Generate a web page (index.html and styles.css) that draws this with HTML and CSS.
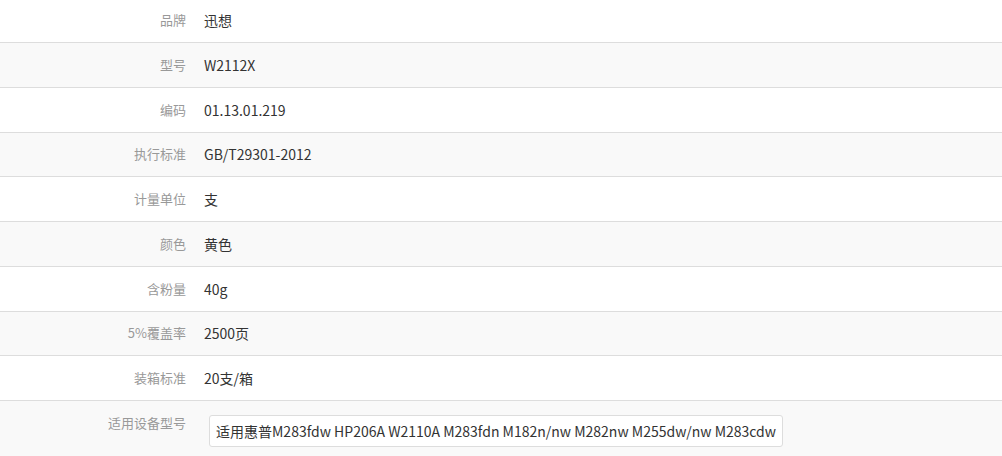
FILE: index.html
```html
<!DOCTYPE html>
<html lang="zh">
<head>
<meta charset="utf-8">
<link rel="stylesheet" href="styles.css">
</head>
<body>
<table class="spec">
  <tbody>
    <tr><th>品牌</th><td>迅想</td></tr>
    <tr><th>型号</th><td>W2112X</td></tr>
    <tr><th>编码</th><td>01.13.01.219</td></tr>
    <tr><th>执行标准</th><td>GB/T29301-2012</td></tr>
    <tr><th>计量单位</th><td>支</td></tr>
    <tr><th>颜色</th><td>黄色</td></tr>
    <tr><th>含粉量</th><td>40g</td></tr>
    <tr><th>5%覆盖率</th><td>2500页</td></tr>
    <tr><th>装箱标准</th><td>20支/箱</td></tr>
    <tr class="last"><th>适用设备型号</th><td><div class="box">适用惠普M283fdw HP206A W2110A M283fdn M182n/nw M282nw M255dw/nw M283cdw</div></td></tr>
  </tbody>
</table>
</body>
</html>
```

FILE: styles.css
```css
html, body {
  margin: 0;
  padding: 0;
  background: #fff;
}
body {
  font-family: "Noto Sans CJK SC", "Liberation Sans", sans-serif;
  font-size: 13px;
  color: #333;
}
.spec {
  width: 100%;
  border-collapse: collapse;
  margin-top: -2.25px;
}
.spec tr {
  height: 44.75px;
}
.spec tr:nth-child(even) {
  background: #f9f9f9;
}
.spec th, .spec td {
  border-top: 1px solid #ddd;
  padding: 0 8px;
  vertical-align: middle;
  line-height: 20px;
}
.spec tr:first-child th, .spec tr:first-child td {
  border-top: none;
}
.spec th {
  width: 178px;
  text-align: right;
  font-weight: normal;
  color: #999;
}
.spec td {
  text-align: left;
  font-size: 14px;
  padding-left: 10px;
}
.spec tr.last th {
  vertical-align: top;
  padding-top: 12px;
}
.spec tr.last td {
  padding-top: 14px;
  padding-bottom: 9px;
}
.box {
  display: inline-block;
  margin-left: 5px;
  border: 1px solid #ddd;
  border-radius: 3px;
  background: #fff;
  padding: 5px 6px;
  font-size: 14px;
  line-height: 20px;
}
```
